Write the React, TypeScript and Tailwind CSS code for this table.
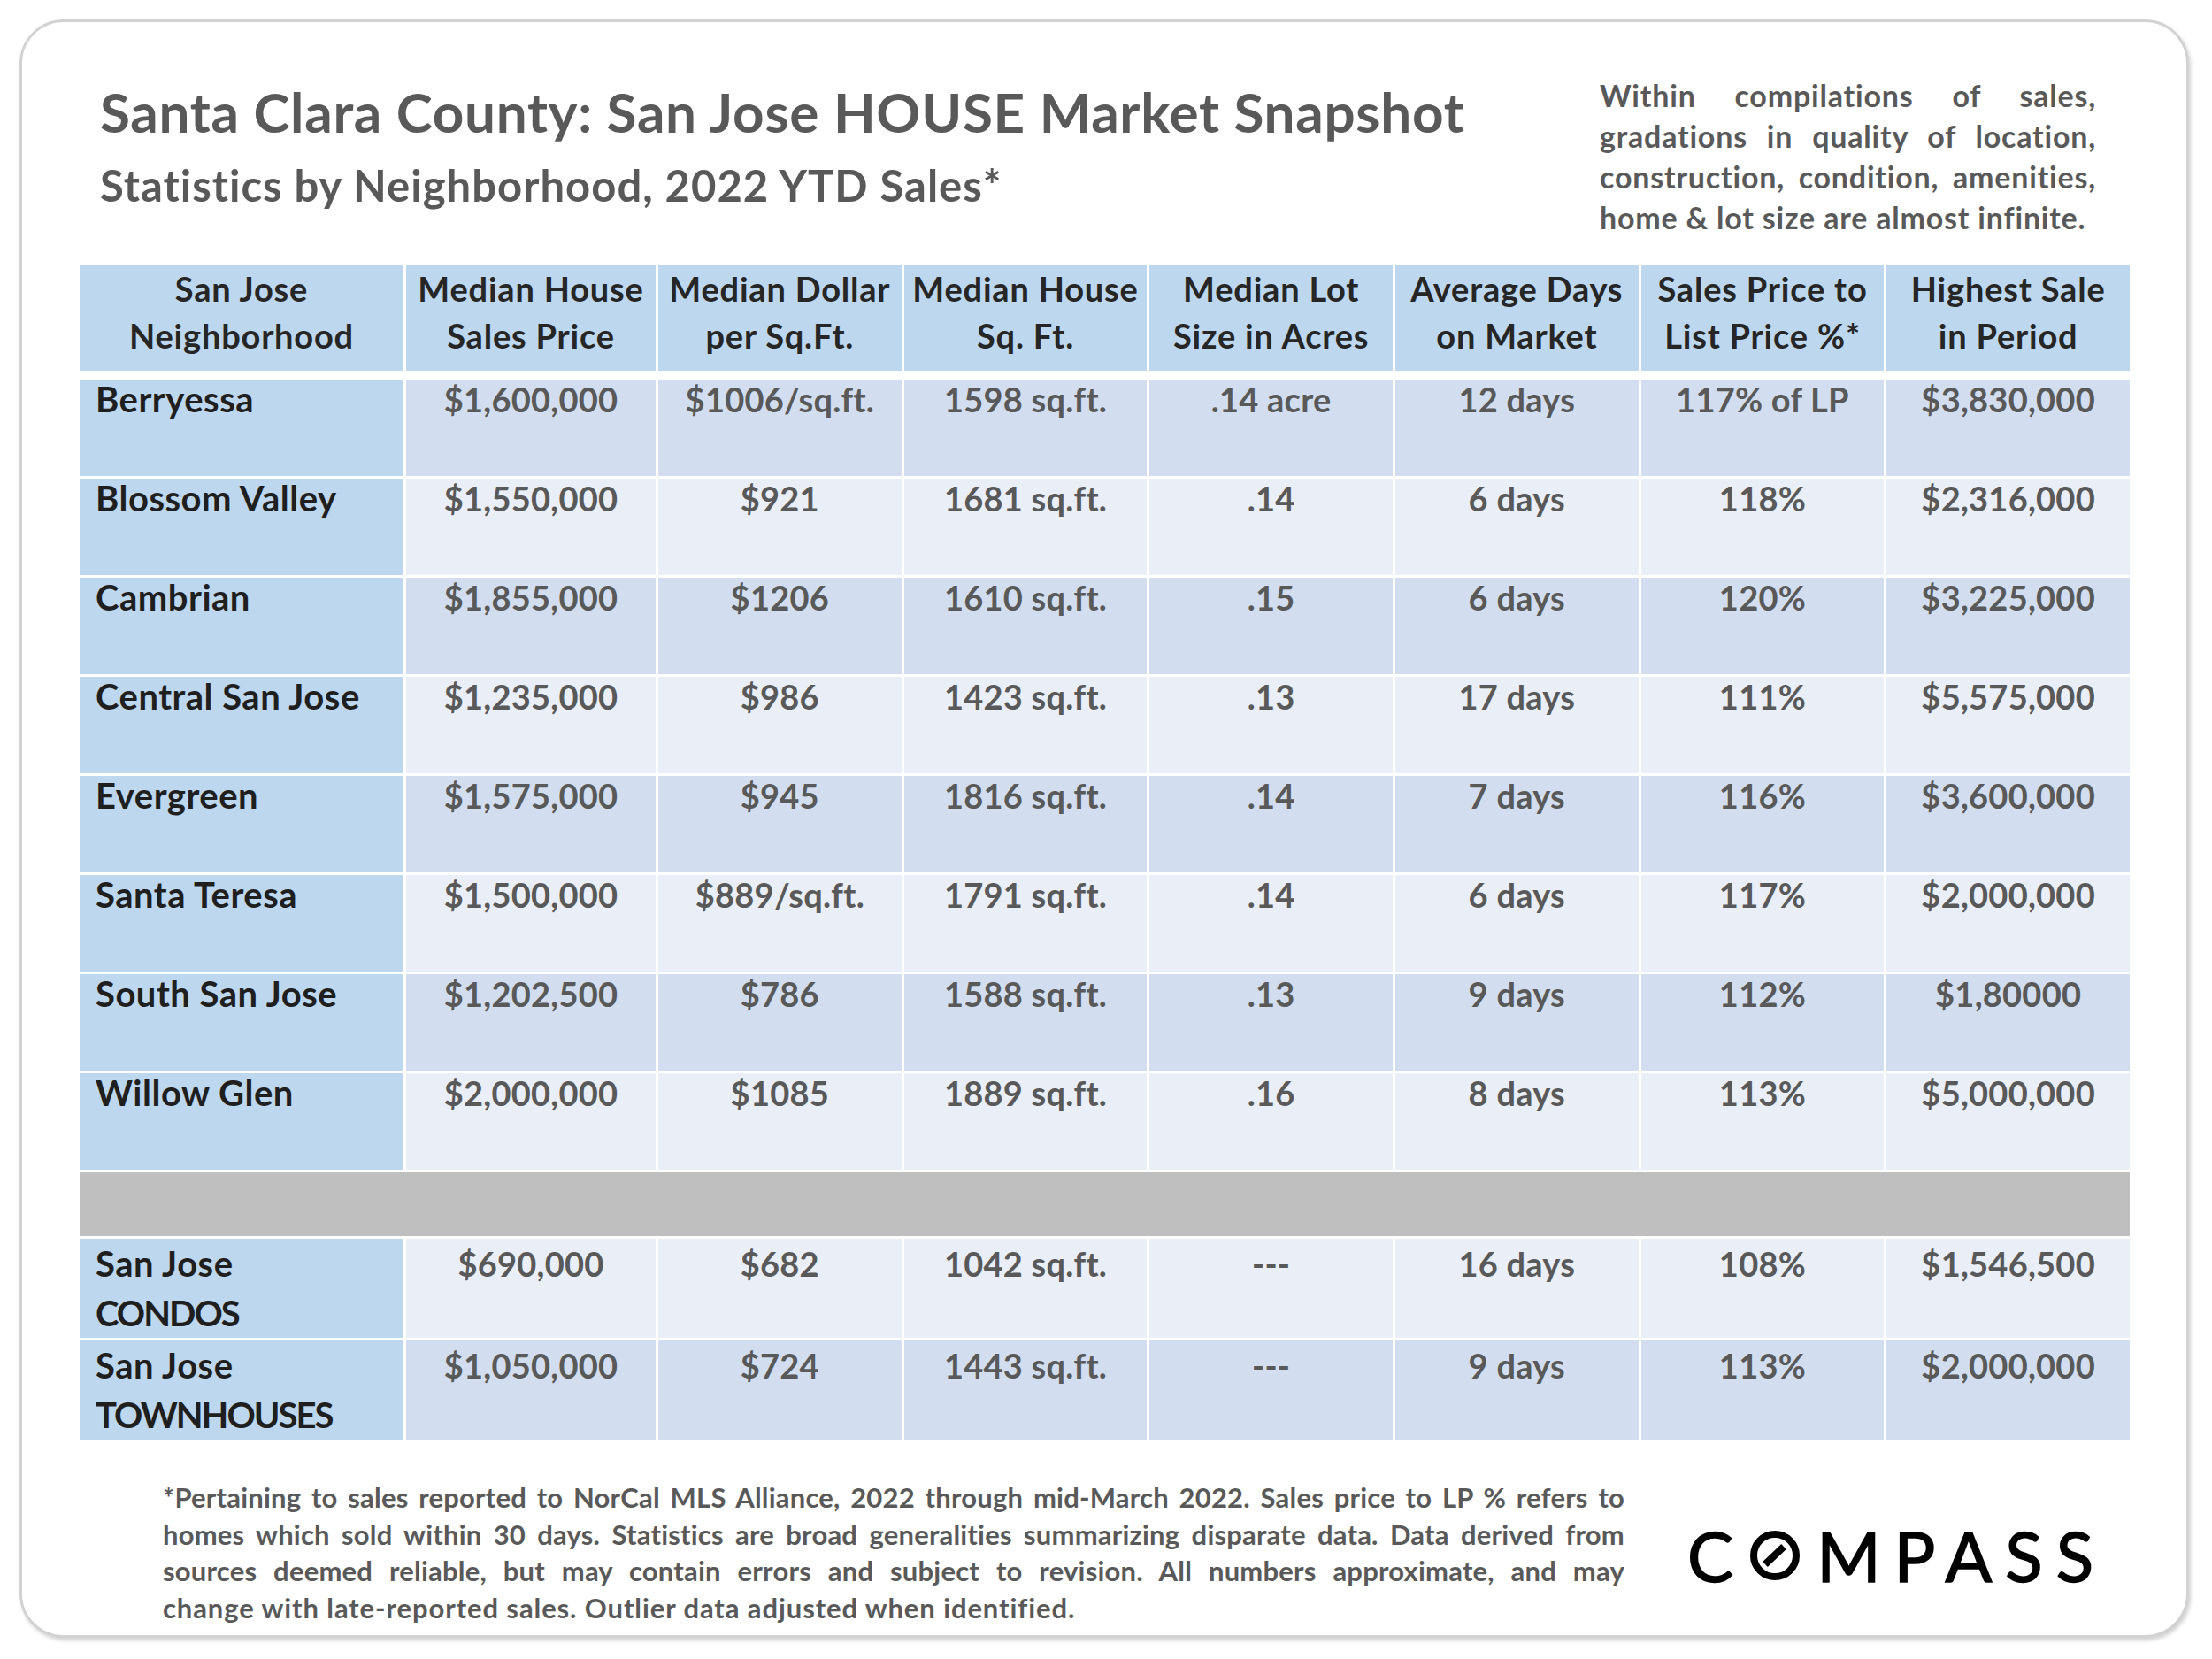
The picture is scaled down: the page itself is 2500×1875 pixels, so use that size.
const HEADERS = [
  ["San Jose", "Neighborhood"],
  ["Median House", "Sales Price"],
  ["Median Dollar", "per Sq.Ft."],
  ["Median House", "Sq. Ft."],
  ["Median Lot", "Size in Acres"],
  ["Average Days", "on Market"],
  ["Sales Price to", "List Price %*"],
  ["Highest Sale", "in Period"],
];

const ROWS = [
  ["Berryessa", "$1,600,000", "$1006/sq.ft.", "1598 sq.ft.", ".14 acre", "12 days", "117% of LP", "$3,830,000"],
  ["Blossom Valley", "$1,550,000", "$921", "1681 sq.ft.", ".14", "6 days", "118%", "$2,316,000"],
  ["Cambrian", "$1,855,000", "$1206", "1610 sq.ft.", ".15", "6 days", "120%", "$3,225,000"],
  ["Central San Jose", "$1,235,000", "$986", "1423 sq.ft.", ".13", "17 days", "111%", "$5,575,000"],
  ["Evergreen", "$1,575,000", "$945", "1816 sq.ft.", ".14", "7 days", "116%", "$3,600,000"],
  ["Santa Teresa", "$1,500,000", "$889/sq.ft.", "1791 sq.ft.", ".14", "6 days", "117%", "$2,000,000"],
  ["South San Jose", "$1,202,500", "$786", "1588 sq.ft.", ".13", "9 days", "112%", "$1,80000"],
  ["Willow Glen", "$2,000,000", "$1085", "1889 sq.ft.", ".16", "8 days", "113%", "$5,000,000"],
];

const OTHER = [
  { name: ["San Jose", "CONDOS"], values: ["$690,000", "$682", "1042 sq.ft.", "---", "16 days", "108%", "$1,546,500"] },
  { name: ["San Jose", "TOWNHOUSES"], values: ["$1,050,000", "$724", "1443 sq.ft.", "---", "9 days", "113%", "$2,000,000"] },
];

const GRID = "grid grid-cols-[366px_282px_repeat(6,minmax(0,1fr))] gap-x-[3px]";

function CompassLogo() {
  return (
    <div className="flex items-center text-[78px] leading-none font-normal text-black [-webkit-text-stroke:1.5px_black]">
      <span>C</span>
      <svg width="56" height="56" viewBox="0 0 56 56" className="ml-[19px] mr-[19px]">
        <circle cx="28" cy="28" r="24" fill="none" stroke="#000" strokeWidth="8" />
        <line x1="17" y1="38" x2="38" y2="18" stroke="#000" strokeWidth="8" />
      </svg>
      <span className="tracking-[15px] mr-[-15px]">MPASS</span>
    </div>
  );
}

export default function App() {
  return (
    <div className="w-[2500px] h-[1875px] bg-white pt-[22px] pl-[22px] font-['Lato','Noto_Sans',sans-serif]">
      <div className="w-[2452px] h-[1829px] rounded-[50px] border-[3px] border-[#d2d2d2] bg-white pt-[59px] pl-[65px] pr-[64px] shadow-[2px_3px_4px_rgba(0,0,0,0.18)]">
        {/* heading */}
        <div className="flex items-start">
          <div className="mt-[5px] pl-[23px] font-bold text-[#595959]">
            <h1 className="text-[62px] leading-[1.2] tracking-[0.7px]">Santa Clara County: San Jose HOUSE Market Snapshot</h1>
            <h2 className="mt-[17px] text-[49px] leading-[1.2] tracking-[1px]">Statistics by Neighborhood, 2022 YTD Sales*</h2>
          </div>
          <div className="ml-auto mr-[38px] mt-[1px] w-[561px] text-[34px] leading-[46px] tracking-[0.8px] font-bold text-[#595959]">
            <p className="text-justify [text-align-last:justify]">Within compilations of sales,</p>
            <p className="text-justify [text-align-last:justify]">gradations in quality of location,</p>
            <p className="text-justify [text-align-last:justify]">construction, condition, amenities,</p>
            <p>home &amp; lot size are almost infinite.</p>
          </div>
        </div>

        {/* table */}
        <div className="mt-[31px] w-[2317px] font-bold">
          <div className={`${GRID} h-[119px]`}>
            {HEADERS.map((h, i) => (
              <div key={i} className="bg-[#bdd7ee] text-center text-[38px] tracking-[0.8px] leading-[53px] text-[#262626]">
                {h[0]}
                <br />
                {h[1]}
              </div>
            ))}
          </div>

          <div className="mt-[10px] flex flex-col gap-y-[3px]">
            {ROWS.map((r, i) => (
              <div key={r[0]} className={`${GRID} h-[109px]`}>
                <div className="bg-[#bdd7ee] pl-[18px] text-[40px] tracking-[0.5px] leading-[44px] text-[#1f1f1f]">{r[0]}</div>
                {r.slice(1).map((v, j) => (
                  <div
                    key={j}
                    className={`${i % 2 === 0 ? "bg-[#d2deef]" : "bg-[#e9eef7]"} text-center text-[38px] tracking-[0.25px] leading-[44px] text-[#595959]`}
                  >
                    {v}
                  </div>
                ))}
              </div>
            ))}

            <div className="h-[72px] bg-[#bfbfbf]" />

            {OTHER.map((o, i) => (
              <div key={o.name[1]} className={`${GRID} h-[112px]`}>
                <div className="bg-[#bdd7ee] pl-[18px] text-[40px] tracking-[0.5px] leading-[56px] text-[#1f1f1f]">
                  {o.name[0]}
                  <br />
                  <span className="tracking-[-2px]">{o.name[1]}</span>
                </div>
                {o.values.map((v, j) => (
                  <div
                    key={j}
                    className={`${i % 2 === 0 ? "bg-[#e9eef7]" : "bg-[#d2deef]"} text-center text-[38px] tracking-[0.25px] leading-[56px] text-[#595959]`}
                  >
                    {v}
                  </div>
                ))}
              </div>
            ))}
          </div>
        </div>

        {/* footnote + logo */}
        <div className="flex items-start">
          <div className="ml-[94px] mt-[45px] w-[1652px] text-[31px] leading-[41.5px] tracking-[0.2px] font-bold text-[#595959]">
            <p className="text-justify [text-align-last:justify]">
              *Pertaining to sales reported to NorCal MLS Alliance, 2022 through mid-March 2022. Sales price to LP % refers to
            </p>
            <p className="text-justify [text-align-last:justify]">
              homes which sold within 30 days. Statistics are broad generalities summarizing disparate data. Data derived from
            </p>
            <p className="text-justify [text-align-last:justify]">
              sources deemed reliable, but may contain errors and subject to revision. All numbers approximate, and may
            </p>
            <p className="tracking-[0.9px]">change with late-reported sales. Outlier data adjusted when identified.</p>
          </div>
          <div className="ml-auto mr-[41px] mt-[92px]">
            <CompassLogo />
          </div>
        </div>
      </div>
    </div>
  );
}
